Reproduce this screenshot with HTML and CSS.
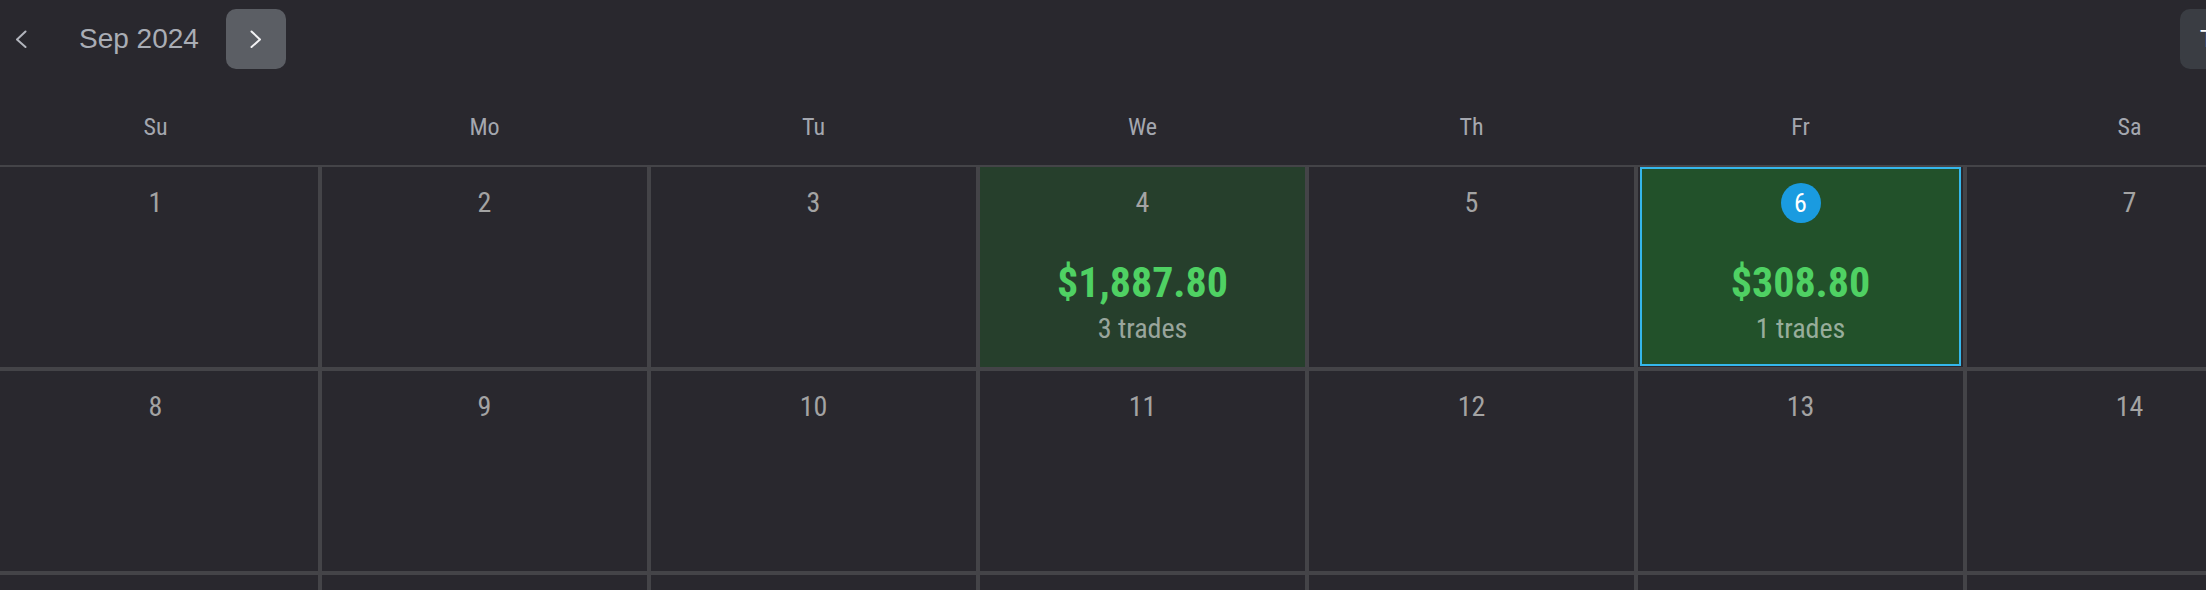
FILE: index.html
```html
<!DOCTYPE html>
<html lang="en">
<head>
    <meta charset="UTF-8">
    <meta name="viewport" content="width=device-width, initial-scale=1.0">
    <title>Trade Calendar</title>
    <link rel="stylesheet" href="styles.css">
</head>
<body>
    <div class="calendar">
        <div class="toolbar">
            <button class="nav-prev" type="button" aria-label="Previous month">
                <svg width="12" height="18" viewBox="0 0 12 18"><path d="M10.5 1.5 L2 9.5 L10.5 17" fill="none" stroke="currentColor" stroke-width="2" stroke-linecap="round" stroke-linejoin="round"/></svg>
            </button>
            <span class="month-title">Sep 2024</span>
            <button class="nav-next" type="button" aria-label="Next month">
                <svg width="12" height="18" viewBox="0 0 12 18"><path d="M1.5 1.5 L10 9.5 L1.5 17" fill="none" stroke="currentColor" stroke-width="2" stroke-linecap="round" stroke-linejoin="round"/></svg>
            </button>
            <button class="today-btn" type="button">Today</button>
        </div>

        <div class="weekdays">
            <div>Su</div>
            <div>Mo</div>
            <div>Tu</div>
            <div>We</div>
            <div>Th</div>
            <div>Fr</div>
            <div>Sa</div>
        </div>

        <div class="days" id="days"></div>
    </div>

    <script>
        // resultados por dia (septiembre 2024)
        var trades = {
            4: { pnl: 1887.80, count: 3 },
            6: { pnl: 308.80, count: 1 }
        };
        var today = 6;
        var daysEl = document.getElementById('days');

        for (var d = 1; d <= 35; d++) {
            var cell = document.createElement('div');
            cell.className = 'cell';
            var body = document.createElement('div');
            body.className = 'cell-body';

            if (d <= 30) {
                var num = document.createElement('span');
                num.className = 'day-num';
                num.textContent = d;
                body.appendChild(num);

                if (trades[d]) {
                    body.classList.add('win');
                    var pnl = document.createElement('span');
                    pnl.className = 'pnl';
                    pnl.textContent = '$' + trades[d].pnl.toLocaleString('en-US', { minimumFractionDigits: 2 });
                    var count = document.createElement('span');
                    count.className = 'trade-count';
                    count.textContent = trades[d].count + ' trades';
                    body.appendChild(pnl);
                    body.appendChild(count);
                }
                if (d === today) {
                    body.classList.add('today');
                }
            }

            cell.appendChild(body);
            daysEl.appendChild(cell);
        }
    </script>
</body>
</html>
```

FILE: styles.css
```css
html, body {
    height: 590px;
}
body {
    margin: 0;
    background-color: #29282e;
    font-family: "Roboto Condensed", Roboto, sans-serif;
    font-stretch: condensed;
    overflow: hidden;
}
.calendar {
    width: 2303px;
    margin-left: -9px;
}
.toolbar {
    display: flex;
    align-items: center;
    height: 60px;
    padding: 9px 24px 0;
}
.toolbar button {
    border: none;
    cursor: pointer;
    display: flex;
    align-items: center;
    justify-content: center;
}
.nav-prev {
    background: none;
    color: #b2b5bd;
    padding: 0;
    width: 12px;
    height: 60px;
}
.month-title {
    font-family: "Liberation Sans", Arial, sans-serif;
    font-stretch: normal;
    font-size: 28px;
    color: #a9adb5;
    margin-left: 52px;
}
.nav-next {
    width: 60px;
    height: 60px;
    margin-left: 27px;
    background-color: #5b5e64;
    color: #f2f2f4;
    border-radius: 10px;
}
.today-btn {
    margin-left: auto;
    width: 90px;
    height: 60px;
    background-color: #3a3d43;
    color: #ffffff;
    border-radius: 10px;
    font-family: "Liberation Sans", Arial, sans-serif;
    font-size: 24px;
    padding: 0 0 0 20px;
    justify-content: flex-start !important;
}
.weekdays {
    display: grid;
    grid-template-columns: repeat(7, 329px);
    height: 96px;
    align-items: end;
    padding-bottom: 24px;
    box-sizing: border-box;
}
.weekdays div {
    text-align: center;
    font-size: 24px;
    line-height: 28px;
    color: #a4a7af;
}
.days {
    display: grid;
    grid-template-columns: repeat(7, 329px);
    grid-auto-rows: 204px;
}
.cell {
    border: 2px solid #444448;
    box-sizing: border-box;
    display: flex;
}
.cell-body {
    flex: 1;
    display: flex;
    flex-direction: column;
    align-items: center;
    padding-top: 16px;
}
.cell-body.win {
    background-color: #263f2c;
}
.cell-body.today {
    background-color: #22512a;
    border: 2px solid #35b7ec;
    margin: 0 2px 1px;
    padding-top: 14px;
}
.day-num {
    font-size: 28px;
    line-height: 40px;
    color: #a3a3a3;
}
.today .day-num {
    width: 40px;
    height: 40px;
    border-radius: 50%;
    background-color: #1a9be0;
    color: #ffffff;
    text-align: center;
    font-size: 26px;
}
.pnl {
    margin-top: 36px;
    font-size: 42px;
    line-height: 48px;
    font-weight: bold;
    color: #4fd163;
}
.trade-count {
    margin-top: 6px;
    font-size: 28px;
    line-height: 32px;
    color: rgba(255, 255, 255, 0.55);
}
```
